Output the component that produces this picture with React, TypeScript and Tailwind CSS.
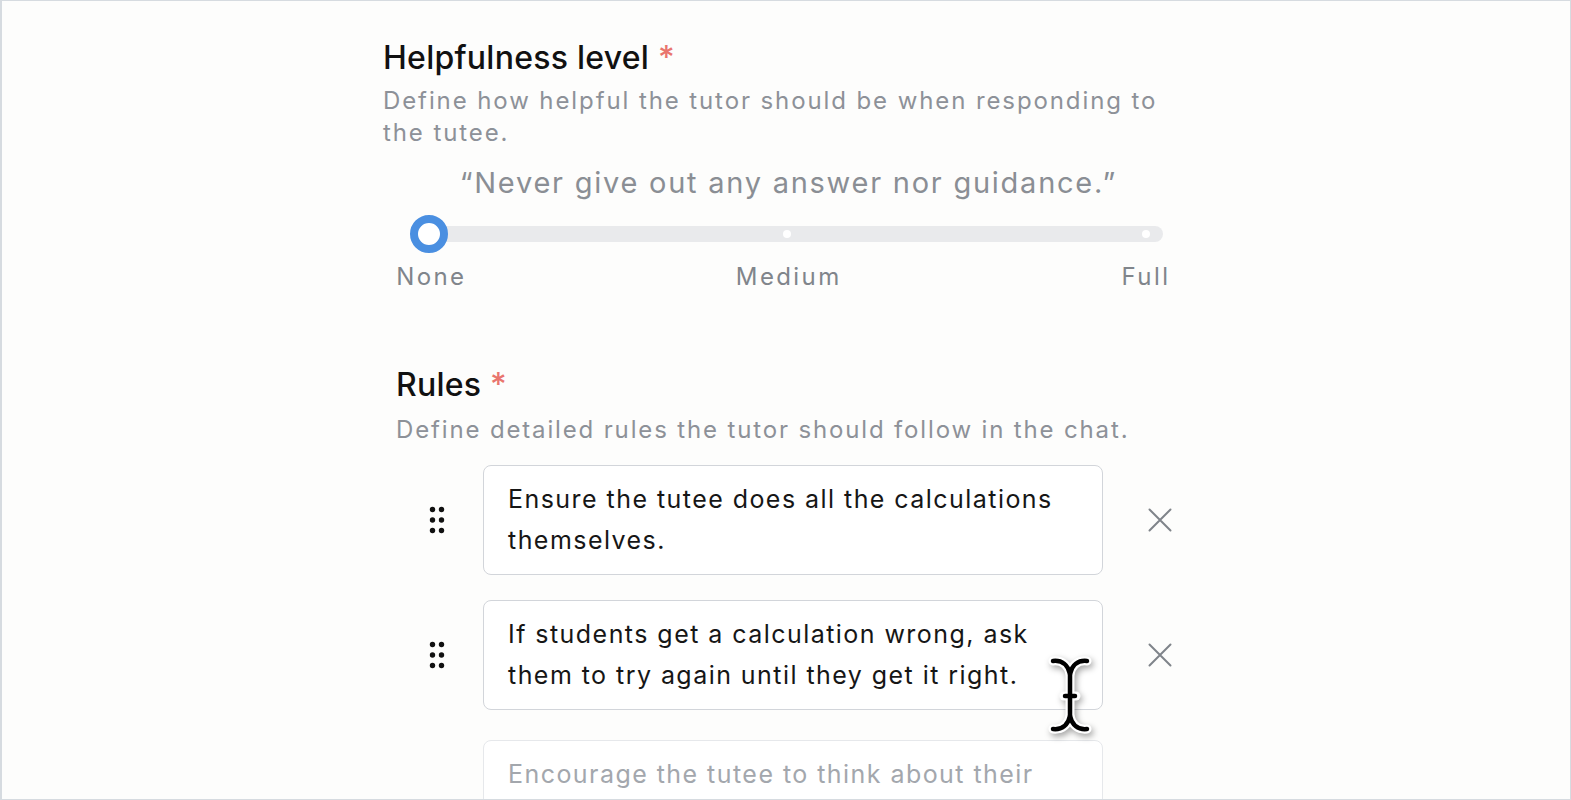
const rules = [
  ["Ensure the tutee does all the calculations", "themselves."],
  ["If students get a calculation wrong, ask", "them to try again until they get it right."],
];

function DragHandle() {
  return (
    <svg width="16" height="28" viewBox="0 0 16 28" className="text-[#111]">
      {[0, 1, 2].map((r) =>
        [0, 1].map((c) => (
          <circle key={`${r}-${c}`} cx={3.5 + c * 9} cy={3.5 + r * 10.5} r="2.7" fill="currentColor" />
        ))
      )}
    </svg>
  );
}

function CloseIcon() {
  return (
    <svg width="24" height="24" viewBox="0 0 24 24" fill="none" stroke="#7f848a" strokeWidth="2" strokeLinecap="round">
      <path d="M1.5 1.5 22.5 22.5M22.5 1.5 1.5 22.5" />
    </svg>
  );
}

function TextCursor() {
  return (
    <svg width="46" height="82" viewBox="0 0 46 82" fill="none" className="drop-shadow-[2px_3px_3px_rgba(0,0,0,0.35)]">
      <g stroke="white" strokeWidth="9" strokeLinecap="round" strokeLinejoin="round">
        <path d="M6 7C15 6 21 11 23 20C25 11 31 6 40 7" />
        <path d="M23 20V62" />
        <path d="M17 42H29" />
        <path d="M6 75C15 76 21 71 23 62C25 71 31 76 40 75" />
      </g>
      <g stroke="black" strokeWidth="4.5" strokeLinecap="round" strokeLinejoin="round">
        <path d="M6 7C15 6 21 11 23 20C25 11 31 6 40 7" />
        <path d="M23 20V62" />
        <path d="M18 42H28" />
        <path d="M6 75C15 76 21 71 23 62C25 71 31 76 40 75" />
      </g>
    </svg>
  );
}

export default function App() {
  return (
    <div
      className="relative h-[800px] w-full overflow-hidden border border-l-2 border-[#d6dbe0] bg-[#fdfdfc]"
      style={{ fontFamily: "Inter, 'Noto Sans', sans-serif" }}
    >
      <div className="ml-[381px] w-[800px] pt-[37px]">
        {/* Helpfulness level */}
        <h2 className="text-[32px] leading-[40px] font-medium tracking-[0.25px] text-[#111]">
          Helpfulness level <span className="text-[#e9756e]">*</span>
        </h2>
        <p className="mt-[7px] text-[24px] leading-[32px] tracking-[1.9px] text-[#8d9198] whitespace-nowrap">
          Define how helpful the tutor should be when responding to
          <br />
          the tutee.
        </p>

        <div className="ml-[29px] w-[751px]">
          <p className="mt-[16px] pl-[1.75px] text-center text-[29px] leading-[36px] tracking-[1.75px] text-[#8a8e94] whitespace-nowrap">
            “Never give out any answer nor guidance.”
          </p>
          <div className="relative mt-[14px] flex h-[38px] items-center">
            <div className="h-4 w-full rounded-full bg-[#e9eaec]" />
            <div className="absolute left-[371px] top-[15px] h-2 w-2 rounded-full bg-white" />
            <div className="absolute left-[730px] top-[15px] h-2 w-2 rounded-full bg-white" />
            <div className="absolute left-[-2px] top-0 h-[38px] w-[38px] rounded-full border-[8px] border-[#4a8fe1] bg-white" />
          </div>
          <div className="mt-[8px] flex justify-between px-[17px] text-[24px] leading-[32px] tracking-[2.4px] text-[#80858b]">
            {["None", "Medium", "Full"].map((l) => (
              <div key={l} className="flex w-0 justify-center whitespace-nowrap pl-[2.4px]">
                {l}
              </div>
            ))}
          </div>
        </div>

        {/* Rules */}
        <div className="ml-[13px] mt-[72px]">
          <h2 className="text-[32px] leading-[40px] font-medium tracking-[0.25px] text-[#111]">
            Rules <span className="text-[#e9756e]">*</span>
          </h2>
          <p className="mt-[9px] text-[24px] leading-[32px] tracking-[1.85px] text-[#8d9198] whitespace-nowrap">
            Define detailed rules the tutor should follow in the chat.
          </p>

          <div className="mt-[19px] flex flex-col gap-[25px]">
            {rules.map((lines, i) => (
              <div key={i} className="flex items-center">
                <div className="flex w-[82px] justify-center">
                  <DragHandle />
                </div>
                <div className="ml-[5px] w-[620px] rounded-lg border-[1.5px] border-[#d2d5da] bg-white px-6 py-[13px] text-[25px] leading-[41px] tracking-[1.45px] text-[#161616] whitespace-nowrap">
                  {lines[0]}
                  <br />
                  {lines[1]}
                </div>
                <div className="ml-[45px] flex w-[24px] justify-center">
                  <CloseIcon />
                </div>
              </div>
            ))}
            <div className="mt-[5px] flex items-center">
              <div className="w-[82px]" />
              <div className="ml-[5px] w-[620px] rounded-lg border-[1.5px] border-[#e6e8eb] bg-white px-6 py-[13px] text-[25px] leading-[41px] tracking-[1.45px] text-[#a3a7ad] whitespace-nowrap">
                Encourage the tutee to think about their
                <br />
                process
              </div>
            </div>
          </div>
        </div>
      </div>

      <div className="absolute left-[1045px] top-[653px]">
        <TextCursor />
      </div>
    </div>
  );
}
